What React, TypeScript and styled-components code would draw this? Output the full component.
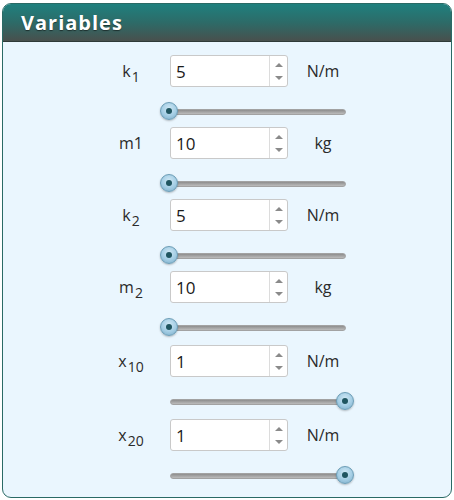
import React from 'react';
import styled, { createGlobalStyle } from 'styled-components';

const GlobalStyle = createGlobalStyle`
    html, body {
        margin: 0;
        padding: 0;
        background: #ffffff;
    }
    body {
        font-family: "Open Sans", "DejaVu Sans", sans-serif;
    }
`

const Panel = styled.div`
    margin: 3px 0 0 2px;
    width: 450px;
    height: 495px;
    box-sizing: border-box;
    border: 1px solid #2a6a65;
    border-radius: 9px;
    background: #eaf6fe;
    overflow: hidden;
`

const Header = styled.div`
    height: 38px;
    box-sizing: border-box;
    padding-left: 18px;
    display: flex;
    align-items: center;
    background: linear-gradient(to bottom, #1f807e 0%, #2d6b68 50%, #48504d 100%);
    border-bottom: 1px solid #2f3a38;
    color: #ffffff;
    font-family: "Open Sans", sans-serif;
    font-weight: 700;
    font-size: 20px;
    letter-spacing: 1px;
    text-shadow: 0 1px 1px rgba(0, 0, 0, 0.5);
`

const Body = styled.div`
    padding-top: 13px;
    display: flex;
    flex-direction: column;
`

const Block = styled.div`
    display: flex;
    flex-direction: column;
`

const Row = styled.div`
    display: flex;
    align-items: center;
    height: 32px;
    padding-left: 93px;
`

const Label = styled.div`
    width: 70px;
    margin-right: 4px;
    text-align: center;
    font-size: 16px;
    color: #2a2a2a;
    sub {
        font-size: 14px;
        vertical-align: -5px;
        line-height: 0;
        margin-left: 1px;
    }
`

const SpinBox = styled.div`
    display: flex;
    width: 118px;
    height: 32px;
    box-sizing: border-box;
    border: 1px solid #c9c9c9;
    border-radius: 3px;
    background: #ffffff;
`

const SpinValue = styled.div`
    flex: 1;
    display: flex;
    align-items: center;
    padding-left: 5px;
    font-size: 17px;
    color: #1a1a1a;
`

const SpinButtons = styled.div`
    width: 18px;
    border-left: 1px solid #dcdcdc;
    display: flex;
    flex-direction: column;
    align-items: center;
    justify-content: space-between;
    padding: 7px 0 6px;
    box-sizing: border-box;
`

const Arrow = styled.div<{ $down?: boolean }>`
    width: 0;
    height: 0;
    border-left: 4px solid transparent;
    border-right: 4px solid transparent;
    ${p => p.$down
        ? 'border-top: 4px solid #8a8a8a;'
        : 'border-bottom: 4px solid #8a8a8a;'}
`

const Unit = styled.div`
    width: 50px;
    margin-left: 10px;
    text-align: center;
    font-size: 16px;
    color: #2a2a2a;
`

const SliderArea = styled.div<{ $tall?: boolean }>`
    height: ${p => p.$tall ? '42px' : '40px'};
    padding-left: 167px;
    padding-top: 22px;
    box-sizing: border-box;
`

const Track = styled.div`
    position: relative;
    width: 174px;
    height: 4px;
    border-radius: 3px;
    background: linear-gradient(to bottom, #8e8e8e, #bcbcbc);
    border: 1px solid #a2a2a2;
`

const Thumb = styled.div`
    position: absolute;
    top: -8px;
    width: 18px;
    height: 18px;
    box-sizing: border-box;
    border-radius: 50%;
    border: 1px solid #6b9db6;
    background: radial-gradient(circle at 50% 35%, #cfe8f5 0%, #a3cde4 55%, #78aac6 100%);
    box-shadow: 0 1px 2px rgba(0, 0, 0, 0.25);
    display: flex;
    align-items: center;
    justify-content: center;
    &::after {
        content: '';
        width: 6px;
        height: 6px;
        border-radius: 50%;
        background: #1f5560;
    }
`

type Variable = {
    name: React.ReactNode
    value: string
    unit: string
    pct: number
    tall?: boolean
}

const variables: Variable[] = [
    { name: <>k<sub>1</sub></>, value: '5', unit: 'N/m', pct: 0 },
    { name: <>m1</>, value: '10', unit: 'kg', pct: 0 },
    { name: <>k<sub>2</sub></>, value: '5', unit: 'N/m', pct: 0 },
    { name: <>m<sub>2</sub></>, value: '10', unit: 'kg', pct: 0, tall: true },
    { name: <>x<sub>10</sub></>, value: '1', unit: 'N/m', pct: 1, tall: true },
    { name: <>x<sub>20</sub></>, value: '1', unit: 'N/m', pct: 1 },
]

const VariableControl = ({ name, value, unit, pct, tall }: Variable) => {
    return (
        <Block>
            <Row>
                <Label>{name}</Label>
                <SpinBox>
                    <SpinValue>{value}</SpinValue>
                    <SpinButtons>
                        <Arrow />
                        <Arrow $down />
                    </SpinButtons>
                </SpinBox>
                <Unit>{unit}</Unit>
            </Row>
            <SliderArea $tall={tall}>
                <Track>
                    <Thumb style={{ left: -11 + pct * 176 }} />
                </Track>
            </SliderArea>
        </Block>
    )
}

export default function App() {
    return (
        <>
            <GlobalStyle />
            <Panel>
                <Header>Variables</Header>
                <Body>
                    {variables.map((v, i) => <VariableControl key={i} {...v} />)}
                </Body>
            </Panel>
        </>
    )
}
